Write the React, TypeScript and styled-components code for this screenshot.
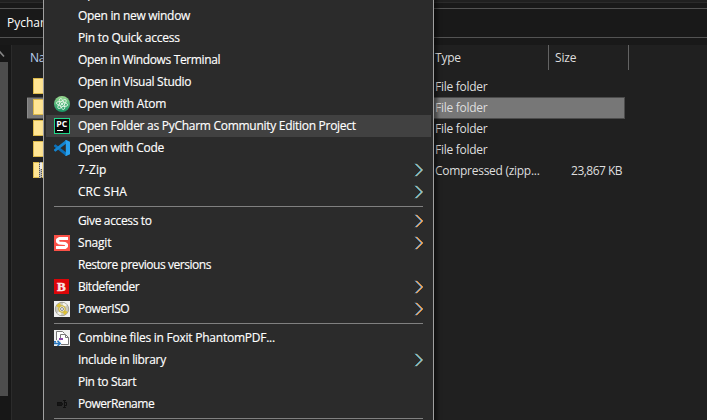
import React from 'react';
import styled, { createGlobalStyle } from 'styled-components';

const Global = createGlobalStyle`
  * { box-sizing: border-box; }
  body { margin: 0; background: #202020; overflow: hidden; }
`;

const Window = styled.div`
  position: relative;
  width: 707px;
  height: 420px;
  overflow: hidden;
  display: flex;
  flex-direction: column;
  background: #202020;
  color: #dedede;
  font: 12px/21px 'Open Sans', 'Noto Sans', sans-serif;
`;

const Ribbon = styled.div`
  flex: none;
  height: 3px;
  border-bottom: 1px solid #2b2b2b;
`;

const AddressArea = styled.div`
  flex: none;
  height: 42px;
  padding: 5px 0 7px;
  background: #191919;
`;

const AddressBar = styled.div`
  height: 30px;
  padding: 0 7px;
  border: solid #535353;
  border-width: 1px 0;
  line-height: 28px;
  color: #fff;
`;

const Content = styled.div`
  flex: 1;
  display: flex;
  min-height: 0;
`;

const ScrollTrack = styled.div`
  flex: none;
  width: 12px;
  background: #171717;
  border-right: 1px solid #2b2b2b;
`;

const ScrollUp = styled.svg`
  display: block;
  width: 8px;
  height: 17px;
`;

const ScrollThumb = styled.div`
  width: 8px;
  height: 334px;
  background: #4d4d4d;
`;

const FileList = styled.div`
  flex: 1;
  padding-left: 15px;
`;

const HeaderRow = styled.div`
  display: grid;
  grid-template-columns: 401px 121px 80px;
  height: 25px;
  margin-bottom: 6px;
  line-height: 25px;
`;

const HeaderCell = styled.div<{ $pad: number; $divider?: boolean; $tint?: string }>`
  padding-left: ${p => p.$pad}px;
  border-right: 1px solid ${p => (p.$divider ? '#636363' : 'transparent')};
  color: ${p => p.$tint ?? '#dedede'};
  letter-spacing: -0.2px;
`;

const FileRow = styled.div<{ $selected?: boolean }>`
  display: grid;
  grid-template-columns: 401px 120px 77px;
  align-items: center;
  width: 598px;
  height: 21px;
  background: ${p => (p.$selected ? '#777' : 'transparent')};
  box-shadow: ${p => (p.$selected ? '0 1px #4c4c4c, inset 0 1px #4c4c4c, inset -1px 0 #4c4c4c, inset 1px 0 #8a8a8a' : 'none')};
`;

const FileIcon = styled.svg`
  align-self: start;
  width: 16px;
  height: 16px;
  margin: 2px 0 0 6px;
`;

const FileType = styled.span`
  padding-left: 7px;
  white-space: nowrap;
  letter-spacing: -0.28px;
`;

const FileSize = styled.span`
  padding-right: 3px;
  text-align: right;
  white-space: nowrap;
  letter-spacing: -0.52px;
`;

const Menu = styled.div`
  position: absolute;
  top: -20px;
  left: 43px;
  width: 391px;
  height: 480px;
  padding: 2px;
  border: 1px solid #a0a0a0;
  background: #2b2b2b;
  box-shadow: 3px 3px 4px rgba(0, 0, 0, 0.5);
  color: #fff;
`;

const MenuRow = styled.div<{ $active?: boolean }>`
  display: grid;
  grid-template-columns: 24px 1fr 8px;
  align-items: center;
  height: 22px;
  padding: 0 8px;
  line-height: 22px;
  background: ${p => (p.$active ? '#414141' : 'transparent')};
`;

const Label = styled.span<{ $tracking: number }>`
  white-space: nowrap;
  letter-spacing: ${p => p.$tracking}px;
  -webkit-text-stroke: 0.15px currentColor;
`;

const Separator = styled.div`
  height: 7px;
  padding: 3px 8px;

  &::before {
    content: '';
    display: block;
    height: 1px;
    background: #808080;
  }
`;

const Icon = styled.svg`
  display: block;
  width: 16px;
  height: 16px;
`;

const ChevronIcon = styled.svg`
  display: block;
  width: 8px;
  height: 14px;
  overflow: visible;
`;

function Chevron({ cool }: { cool?: boolean }) {
  return (
    <ChevronIcon viewBox="0 0 8 14" fill="none">
      <path d="M0 .8 6.2 7 0 13.2" stroke={cool ? '#4fb6dc' : '#4b93d6'} />
      <path d="M1.800 .8 8 7 1.800 13.200" stroke={cool ? '#8f7a48' : '#e08228'} />
      <path d="M.9 .8 7.100 7 .9 13.200" stroke={cool ? '#b5eff0' : '#fbdcb4'} strokeWidth=".8" />
    </ChevronIcon>
  );
}

const AtomIcon = () => (
  <Icon viewBox="0 0 16 16">
    <defs>
      <linearGradient id="atomFill" x1="0" y1="0" x2="0" y2="1">
        <stop offset="0" stopColor="#9bd88f" />
        <stop offset=".5" stopColor="#55b97d" />
        <stop offset="1" stopColor="#189364" />
      </linearGradient>
    </defs>
    <circle cx="8" cy="8" r="8" fill="url(#atomFill)" />
    <g fill="none" stroke="#e6f7e8" strokeWidth=".85">
      <ellipse cx="8" cy="8" rx="2.3" ry="5.7" transform="rotate(-18 8 8)" />
      <ellipse cx="8" cy="8" rx="2.3" ry="5.7" transform="rotate(42 8 8)" />
      <ellipse cx="8" cy="8" rx="2.3" ry="5.7" transform="rotate(102 8 8)" />
    </g>
    <circle cx="8" cy="8" r="1" fill="#fff" />
  </Icon>
);

const PyCharmIcon = () => (
  <Icon viewBox="0 0 16 16">
    <path fill="#21d789" d="M0 0h16v16H0z" />
    <path fill="#080808" d="M1 1h14v14H1z" />
    <text x="2.2" y="9" fill="#fff" fontFamily="Open Sans, sans-serif" fontWeight="700" fontSize="8.5" textLength="11" lengthAdjust="spacingAndGlyphs">PC</text>
    <path fill="#fff" d="M3 12h6v1H3z" />
  </Icon>
);

const CodeIcon = () => (
  <Icon viewBox="0 0 16 16">
    <path fill="#0b6fb8" d="M0 5.5 1.4 4.2 12 12.3V16L0 6.4z" />
    <path fill="#1484cf" d="M0 10.5 1.4 11.8 12 3.7V0L0 9.6z" />
    <path fill="#27a0ee" d="m11.2 0 .8-.1L16 1.8v12.4l-4 1.9-.8-.1.6-.9V.9z" />
  </Icon>
);

const SnagitIcon = () => (
  <Icon viewBox="0 0 16 16">
    <path fill="#fb5147" d="M0 0h16v16H0z" />
    <path fill="none" stroke="#fff" strokeWidth="3" strokeLinejoin="round" d="M14 3.4H5.5L3.5 4.8v1.8L5 7.9l6 .5 1.5 1.2v1.7L11 12.6H2" />
  </Icon>
);

const BitdefenderIcon = () => (
  <Icon viewBox="0 0 16 16">
    <path fill="#dc0508" d="M0 0h15v15H0z" />
    <text x="3.1" y="12" fill="#f8e2e2" fontFamily="Liberation Serif, serif" fontWeight="700" fontSize="13" stroke="#f8e2e2" strokeWidth=".5">B</text>
  </Icon>
);

const PowerIsoIcon = () => (
  <Icon viewBox="0 0 16 16">
    <path fill="#f1f1f1" d="M0 0h16v16H0z" />
    <circle cx="8" cy="8" r="6.7" fill="#cbc9be" stroke="#9c9b91" strokeWidth=".9" />
    <path fill="#dfc336" d="M8 8 2.3 5.2A6.3 6.3 0 0 1 6 2zM8 8l5.7 2.8A6.3 6.3 0 0 1 10 14z" />
    <path fill="#f4f3e9" d="m8 8 1-6.3a6.3 6.3 0 0 1 4 2.4zM8 8l-1 6.3a6.3 6.3 0 0 1-4-2.4z" />
    <circle cx="8" cy="8" r="3.3" fill="#f4efce" stroke="#c8ad2b" />
    <circle cx="8" cy="8" r="1.5" fill="#f8f8f8" stroke="#7e828c" strokeWidth=".9" />
  </Icon>
);

const FoxitIcon = () => (
  <Icon viewBox="0 0 16 16">
    <path fill="#f0f0f0" d="M0 0h16v16H0z" />
    <path fill="#fff" stroke="#777" d="M2.5 11.5v-10h6l2 2" />
    <path fill="#fff" stroke="#777" d="M6.5 14.5v-10h5l3 3v7z" />
    <path fill="none" stroke="#777" d="M11.5 4.5v3h3" />
    <path fill="#f0f0f0" d="M1 10h6v6H0v-4z" />
    <path fill="#8c4bab" d="M5 8h4v2H5z" />
    <path fill="none" stroke="#2877bf" strokeWidth="1.5" d="M0 13.5h5.5M3.5 10.8l2.7 2.7-2.7 2.5M0 11.7h2" />
  </Icon>
);

const RenameIcon = () => (
  <Icon viewBox="0 0 16 16" fill="none" stroke="#111">
    <path d="M3 6.5h5M3 9.5h5M3.5 6v4M10.5 5v6M9 4.5h3M9 11.5h3M11 6.5h1.5v3H11" />
    <path d="M4 8h5" strokeWidth="1.6" />
  </Icon>
);

function Folder({ zipped }: { zipped?: boolean }) {
  return (
    <FileIcon viewBox="0 0 16 16">
      <path fill="#dcb94c" d="M0 0h16v16H0z" />
      <path fill="#ffe594" d="M1 1h15v14H1z" />
      {zipped && (
        <>
          <path fill="#b9b9b9" d="M6 0h3v16H6z" />
          <path stroke="#555" strokeDasharray="1 1" d="M6.5 0v16M8.5 1v15" />
          <path fill="#eee" d="M7 1h2v6H7z" />
        </>
      )}
    </FileIcon>
  );
}

type Entry = {
  label: string;
  tracking: number;
  icon?: React.ReactNode;
  active?: boolean;
  submenu?: 'warm' | 'cool';
};

const groups: Entry[][] = [
  [
    { label: 'Open', tracking: -0.2 },
    { label: 'Open in new window', tracking: -0.3 },
    { label: 'Pin to Quick access', tracking: -0.26 },
    { label: 'Open in Windows Terminal', tracking: -0.37 },
    { label: 'Open in Visual Studio', tracking: -0.29 },
    { label: 'Open with Atom', tracking: -0.22, icon: <AtomIcon /> },
    { label: 'Open Folder as PyCharm Community Edition Project', tracking: -0.28, icon: <PyCharmIcon />, active: true },
    { label: 'Open with Code', tracking: -0.27, icon: <CodeIcon /> },
    { label: '7-Zip', tracking: 0.1, submenu: 'cool' },
    { label: 'CRC SHA', tracking: 0.05, submenu: 'cool' },
  ],
  [
    { label: 'Give access to', tracking: -0.35, submenu: 'warm' },
    { label: 'Snagit', tracking: -0.2, icon: <SnagitIcon />, submenu: 'warm' },
    { label: 'Restore previous versions', tracking: -0.45 },
    { label: 'Bitdefender', tracking: -0.47, icon: <BitdefenderIcon />, submenu: 'warm' },
    { label: 'PowerISO', tracking: -0.42, icon: <PowerIsoIcon />, submenu: 'warm' },
  ],
  [
    { label: 'Combine files in Foxit PhantomPDF...', tracking: -0.24, icon: <FoxitIcon /> },
    { label: 'Include in library', tracking: -0.31, submenu: 'cool' },
    { label: 'Pin to Start', tracking: -0.33 },
    { label: 'PowerRename', tracking: -0.47, icon: <RenameIcon /> },
  ],
];

const files = [
  { type: 'File folder' },
  { type: 'File folder', selected: true },
  { type: 'File folder' },
  { type: 'File folder' },
  { type: 'Compressed (zipp...', size: '23,867 KB', zipped: true },
];

export default function App() {
  return (
    <Window>
      <Global />
      <Ribbon />
      <AddressArea>
        <AddressBar>Pycharm</AddressBar>
      </AddressArea>
      <Content>
        <ScrollTrack>
          <ScrollUp viewBox="0 0 8 17" fill="none" stroke="#858585" strokeWidth="1.6">
            <path d="M-4 11 0 7l4 4.5" />
          </ScrollUp>
          <ScrollThumb />
        </ScrollTrack>
        <FileList>
          <HeaderRow>
            <HeaderCell $pad={3} $tint="#b9cff0">Name</HeaderCell>
            <HeaderCell $pad={7} $divider>Type</HeaderCell>
            <HeaderCell $pad={6} $divider>Size</HeaderCell>
          </HeaderRow>
          {files.map((file, i) => (
            <FileRow key={i} $selected={file.selected}>
              <Folder zipped={file.zipped} />
              <FileType>{file.type}</FileType>
              <FileSize>{file.size}</FileSize>
            </FileRow>
          ))}
        </FileList>
      </Content>
      <Menu>
        {groups.map((group, i) => (
          <React.Fragment key={i}>
            {group.map(entry => (
              <MenuRow key={entry.label} $active={entry.active}>
                <span>{entry.icon}</span>
                <Label $tracking={entry.tracking}>{entry.label}</Label>
                {entry.submenu && <Chevron cool={entry.submenu === 'cool'} />}
              </MenuRow>
            ))}
            <Separator />
          </React.Fragment>
        ))}
      </Menu>
    </Window>
  );
}
